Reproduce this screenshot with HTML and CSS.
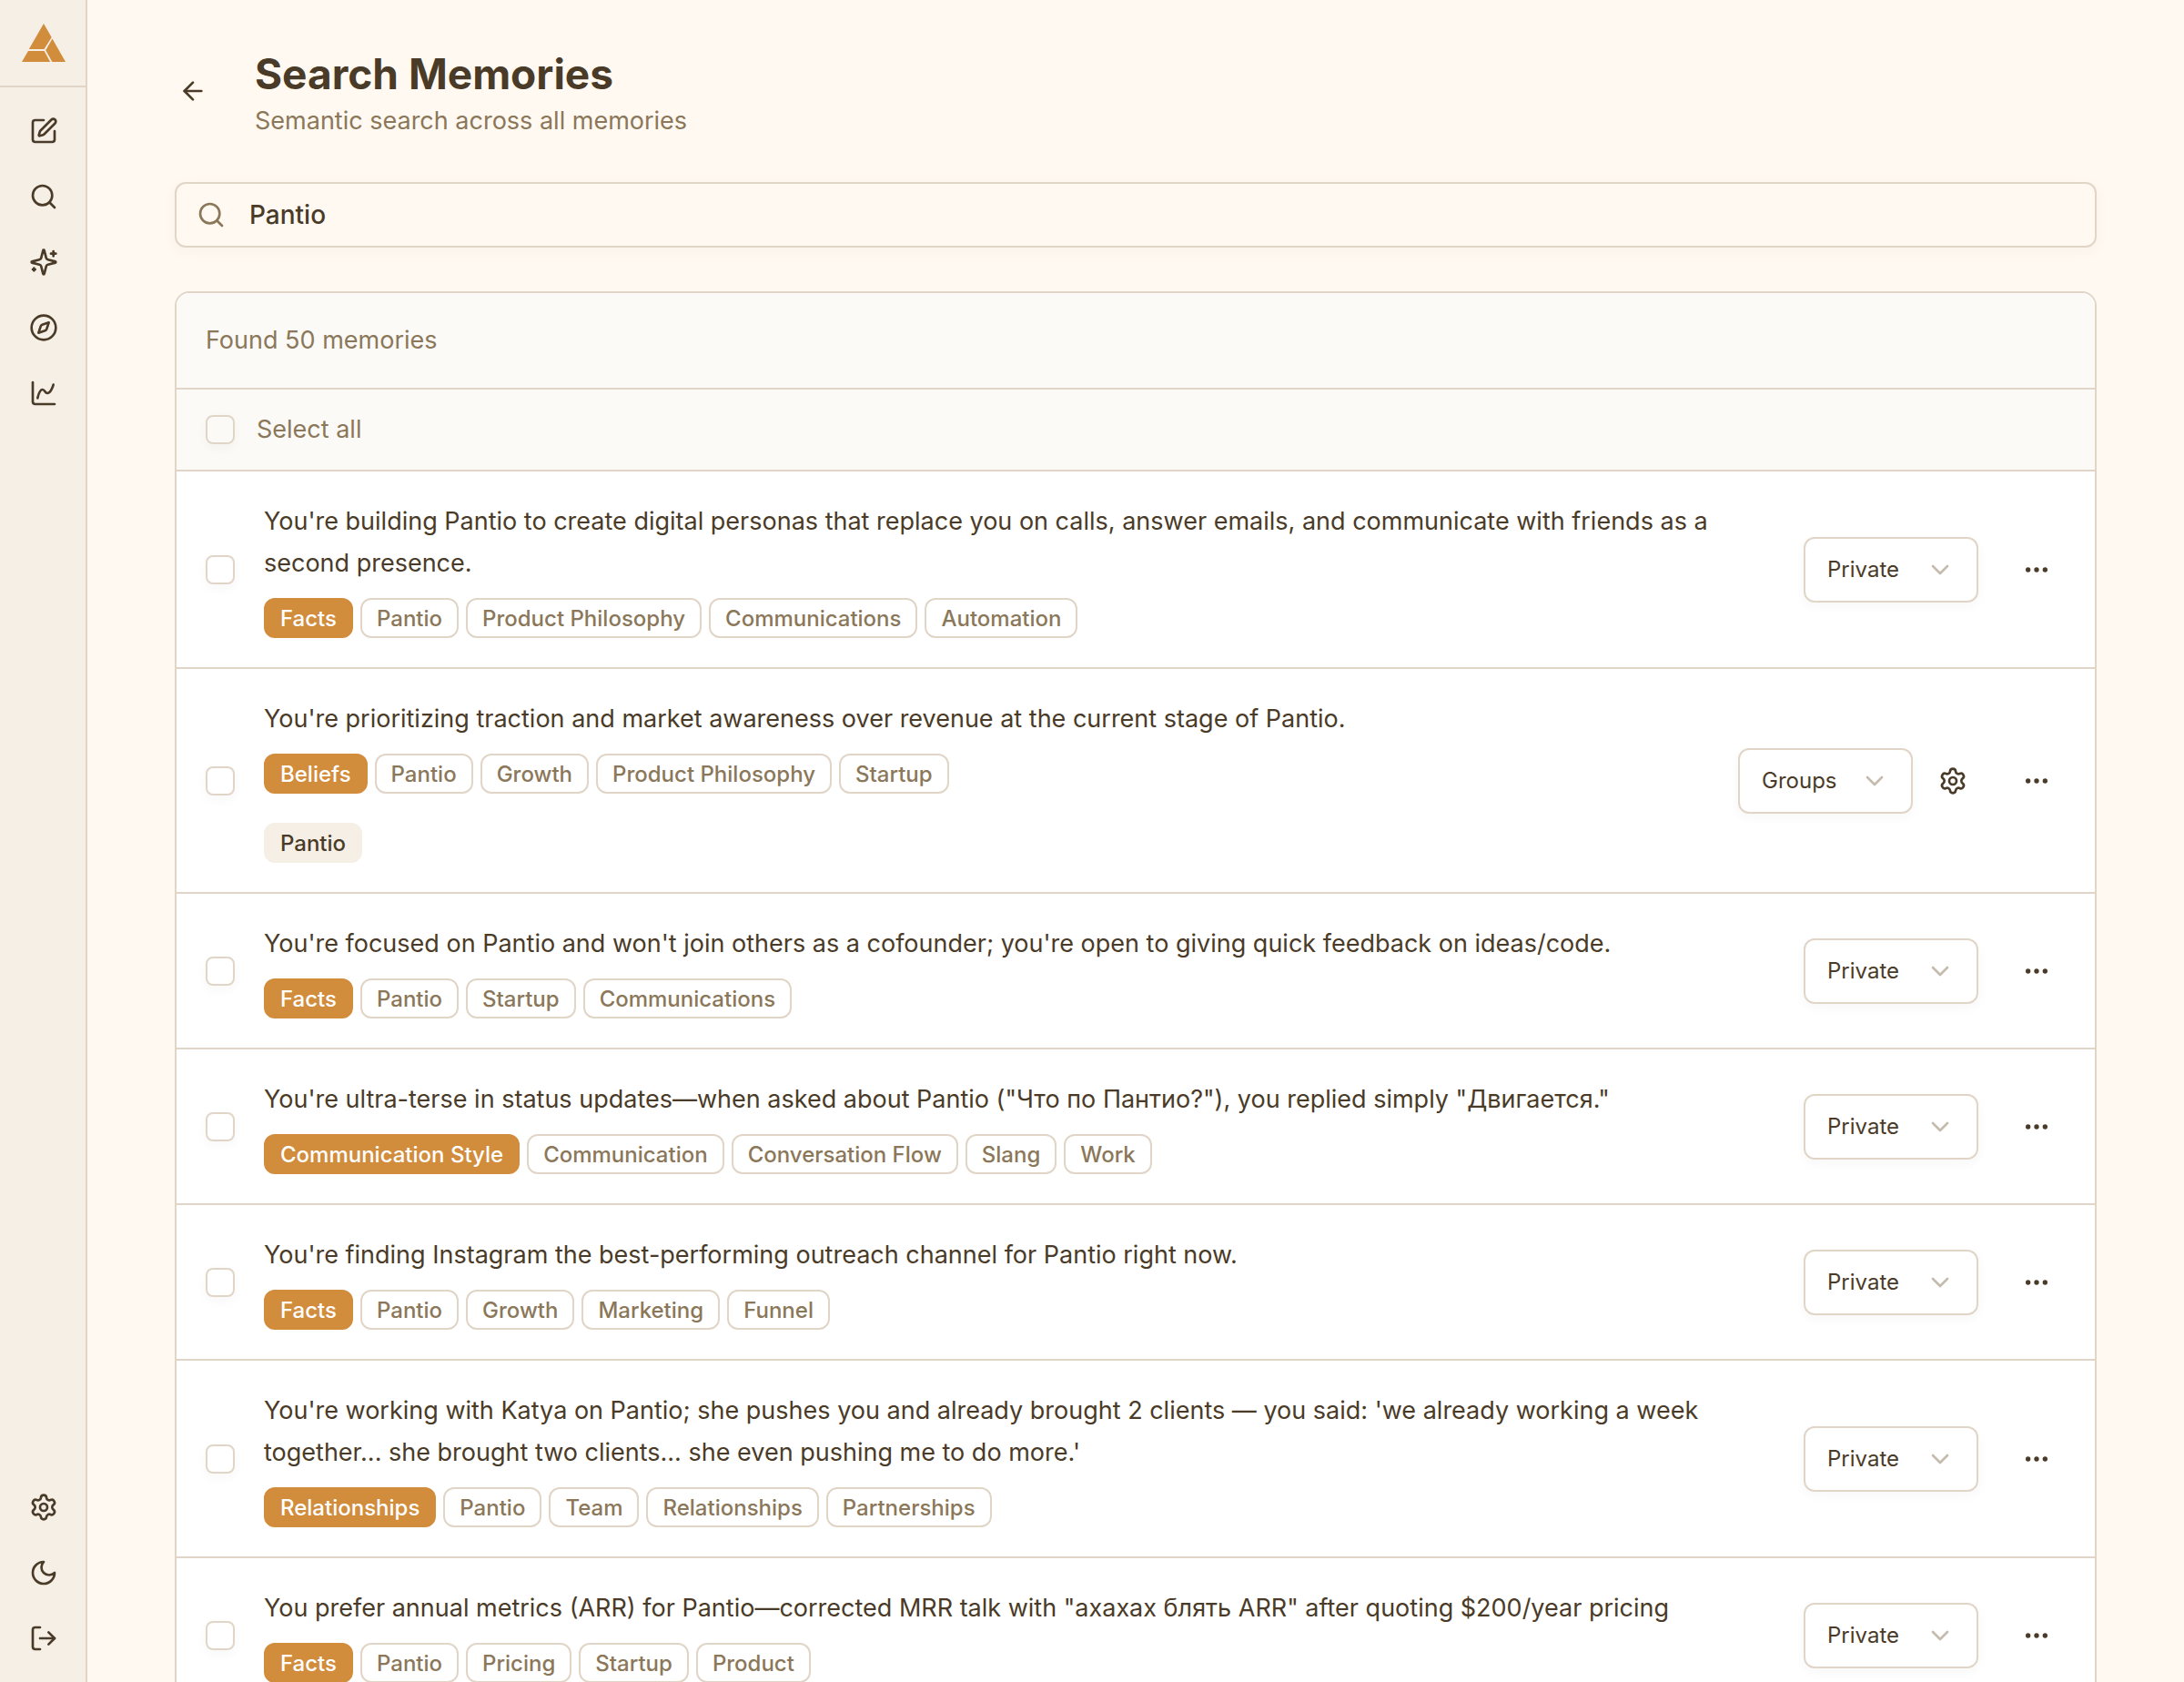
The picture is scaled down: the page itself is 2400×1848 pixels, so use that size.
FILE: index.html
```html
<!DOCTYPE html>
<html lang="en">
<head>
<meta charset="utf-8">
<title>Search Memories</title>
<link rel="stylesheet" href="styles.css">
</head>
<body>
<svg class="sprite" aria-hidden="true">
  <symbol id="i-edit" viewBox="0 0 24 24"><path d="M12 3H5a2 2 0 0 0-2 2v14a2 2 0 0 0 2 2h14a2 2 0 0 0 2-2v-7"/><path d="M18.375 2.625a1 1 0 0 1 3 3l-9.013 9.014a2 2 0 0 1-.853.505l-2.873.84a.5.5 0 0 1-.62-.62l.84-2.873a2 2 0 0 1 .506-.852z"/></symbol>
  <symbol id="i-search" viewBox="0 0 24 24"><circle cx="11" cy="11" r="8"/><path d="m21 21-4.3-4.3"/></symbol>
  <symbol id="i-sparkles" viewBox="0 0 24 24"><path d="M9.937 15.5A2 2 0 0 0 8.5 14.063l-6.135-1.582a.5.5 0 0 1 0-.962L8.5 9.936A2 2 0 0 0 9.937 8.5l1.582-6.135a.5.5 0 0 1 .963 0L14.063 8.5A2 2 0 0 0 15.5 9.937l6.135 1.581a.5.5 0 0 1 0 .964L15.5 14.063a2 2 0 0 0-1.437 1.437l-1.582 6.135a.5.5 0 0 1-.963 0z"/><path d="M20 3v4"/><path d="M22 5h-4"/><path d="M4 17v2"/><path d="M5 18H3"/></symbol>
  <symbol id="i-compass" viewBox="0 0 24 24"><path d="m16.24 7.76-1.804 5.411a2 2 0 0 1-1.265 1.265L7.76 16.24l1.804-5.411a2 2 0 0 1 1.265-1.265z"/><circle cx="12" cy="12" r="10"/></symbol>
  <symbol id="i-chart" viewBox="0 0 24 24"><path d="M3 3v16a2 2 0 0 0 2 2h16"/><path d="M7 16c.5-2 1.5-7 4-7 2 0 2 3 4 3 2.500 0 4.500-5 5-7"/></symbol>
  <symbol id="i-gear" viewBox="0 0 24 24"><path d="M9.671 4.136a2.340 2.340 0 0 1 4.659 0 2.340 2.340 0 0 0 3.319 1.915 2.340 2.340 0 0 1 2.330 4.033 2.340 2.340 0 0 0 0 3.831 2.340 2.340 0 0 1-2.330 4.033 2.340 2.340 0 0 0-3.319 1.915 2.340 2.340 0 0 1-4.659 0 2.340 2.340 0 0 0-3.320-1.915 2.340 2.340 0 0 1-2.330-4.033 2.340 2.340 0 0 0 0-3.831A2.340 2.340 0 0 1 6.350 6.051a2.340 2.340 0 0 0 3.319-1.915"/><circle cx="12" cy="12" r="3"/></symbol>
  <symbol id="i-moon" viewBox="0 0 24 24"><path d="M12 3a6 6 0 0 0 9 9 9 9 0 1 1-9-9Z"/></symbol>
  <symbol id="i-exit" viewBox="0 0 24 24"><path d="M9 21H5a2 2 0 0 1-2-2V5a2 2 0 0 1 2-2h4"/><path d="m16 17 5-5-5-5"/><path d="M21 12H9"/></symbol>
  <symbol id="i-back" viewBox="0 0 24 24"><path d="m12 19-7-7 7-7"/><path d="M19 12H5"/></symbol>
  <symbol id="i-down" viewBox="0 0 24 24"><path d="m6 9 6 6 6-6"/></symbol>
  <symbol id="i-more" viewBox="0 0 24 24"><circle cx="12" cy="12" r="1"/><circle cx="19" cy="12" r="1"/><circle cx="5" cy="12" r="1"/></symbol>
</svg>
<div class="app">
  <aside class="sidebar">
    <a class="logo" href="#" aria-label="Home">
      <svg viewBox="0 0 48 42"><path d="M24 0 32.700 15 24.500 28H7.800Z"/><path d="M33.500 16.500 48 42H33.400L26.200 29.200Z"/><path d="M7 30H24.600L31.200 42H0Z"/></svg>
    </a>
    <nav class="nav" aria-label="Main">
      <a href="#" aria-label="New"><svg class="icon"><use href="#i-edit"/></svg></a>
      <a href="#" aria-label="Search"><svg class="icon"><use href="#i-search"/></svg></a>
      <a href="#" aria-label="Memories"><svg class="icon"><use href="#i-sparkles"/></svg></a>
      <a href="#" aria-label="Explore"><svg class="icon"><use href="#i-compass"/></svg></a>
      <a href="#" aria-label="Analytics"><svg class="icon"><use href="#i-chart"/></svg></a>
    </nav>
    <div class="nav">
      <a href="#" aria-label="Settings"><svg class="icon"><use href="#i-gear"/></svg></a>
      <button type="button" aria-label="Dark mode"><svg class="icon"><use href="#i-moon"/></svg></button>
      <button type="button" aria-label="Log out"><svg class="icon"><use href="#i-exit"/></svg></button>
    </div>
  </aside>
  <main class="main">
    <header class="head">
      <a class="back" href="#" aria-label="Back"><svg class="icon"><use href="#i-back"/></svg></a>
      <div>
        <h1>Search Memories</h1>
        <p>Semantic search across all memories</p>
      </div>
    </header>
    <label class="search">
      <svg class="icon"><use href="#i-search"/></svg>
      <input type="text" value="Pantio" aria-label="Search memories">
    </label>
    <section class="card">
      <p class="found">Found 50 memories</p>
      <label class="all"><input class="check" type="checkbox">Select all</label>
      <ul class="list">
        <li class="row">
          <input class="check" type="checkbox" aria-label="Select memory">
          <div class="body"><p>You're building Pantio to create digital personas that replace you on calls, answer emails, and communicate with friends as a second presence.</p>
            <div class="tags"><span class="tag main-tag">Facts</span><span class="tag">Pantio</span><span class="tag">Product Philosophy</span><span class="tag">Communications</span><span class="tag">Automation</span></div></div>
          <div class="access"><span class="select"><select aria-label="Visibility"><option>Private</option><option>Groups</option></select><svg class="icon"><use href="#i-down"/></svg></span></div>
          <button class="more" type="button" aria-label="More"><svg class="icon"><use href="#i-more"/></svg></button>
        </li>
        <li class="row">
          <input class="check" type="checkbox" aria-label="Select memory">
          <div class="body"><p>You're prioritizing traction and market awareness over revenue at the current stage of Pantio.</p>
            <div class="tags"><span class="tag main-tag">Beliefs</span><span class="tag">Pantio</span><span class="tag">Growth</span><span class="tag">Product Philosophy</span><span class="tag">Startup</span></div>
            <div class="groups"><span class="tag group-tag">Pantio</span></div></div>
          <div class="access"><span class="select"><select aria-label="Visibility"><option>Private</option><option selected>Groups</option></select><svg class="icon"><use href="#i-down"/></svg></span><button class="config" type="button" aria-label="Group settings"><svg class="icon"><use href="#i-gear"/></svg></button></div>
          <button class="more" type="button" aria-label="More"><svg class="icon"><use href="#i-more"/></svg></button>
        </li>
        <li class="row">
          <input class="check" type="checkbox" aria-label="Select memory">
          <div class="body"><p>You're focused on Pantio and won't join others as a cofounder; you're open to giving quick feedback on ideas/code.</p>
            <div class="tags"><span class="tag main-tag">Facts</span><span class="tag">Pantio</span><span class="tag">Startup</span><span class="tag">Communications</span></div></div>
          <div class="access"><span class="select"><select aria-label="Visibility"><option>Private</option><option>Groups</option></select><svg class="icon"><use href="#i-down"/></svg></span></div>
          <button class="more" type="button" aria-label="More"><svg class="icon"><use href="#i-more"/></svg></button>
        </li>
        <li class="row">
          <input class="check" type="checkbox" aria-label="Select memory">
          <div class="body"><p>You're ultra-terse in status updates—when asked about Pantio ("Что по Пантио?"), you replied simply "Двигается."</p>
            <div class="tags"><span class="tag main-tag">Communication Style</span><span class="tag">Communication</span><span class="tag">Conversation Flow</span><span class="tag">Slang</span><span class="tag">Work</span></div></div>
          <div class="access"><span class="select"><select aria-label="Visibility"><option>Private</option><option>Groups</option></select><svg class="icon"><use href="#i-down"/></svg></span></div>
          <button class="more" type="button" aria-label="More"><svg class="icon"><use href="#i-more"/></svg></button>
        </li>
        <li class="row">
          <input class="check" type="checkbox" aria-label="Select memory">
          <div class="body"><p>You're finding Instagram the best-performing outreach channel for Pantio right now.</p>
            <div class="tags"><span class="tag main-tag">Facts</span><span class="tag">Pantio</span><span class="tag">Growth</span><span class="tag">Marketing</span><span class="tag">Funnel</span></div></div>
          <div class="access"><span class="select"><select aria-label="Visibility"><option>Private</option><option>Groups</option></select><svg class="icon"><use href="#i-down"/></svg></span></div>
          <button class="more" type="button" aria-label="More"><svg class="icon"><use href="#i-more"/></svg></button>
        </li>
        <li class="row">
          <input class="check" type="checkbox" aria-label="Select memory">
          <div class="body"><p>You're working with Katya on Pantio; she pushes you and already brought 2 clients — you said: 'we already working a week together... she brought two clients... she even pushing me to do more.'</p>
            <div class="tags"><span class="tag main-tag">Relationships</span><span class="tag">Pantio</span><span class="tag">Team</span><span class="tag">Relationships</span><span class="tag">Partnerships</span></div></div>
          <div class="access"><span class="select"><select aria-label="Visibility"><option>Private</option><option>Groups</option></select><svg class="icon"><use href="#i-down"/></svg></span></div>
          <button class="more" type="button" aria-label="More"><svg class="icon"><use href="#i-more"/></svg></button>
        </li>
        <li class="row">
          <input class="check" type="checkbox" aria-label="Select memory">
          <div class="body"><p>You prefer annual metrics (ARR) for Pantio—corrected MRR talk with "ахахах блять ARR" after quoting $200/year pricing</p>
            <div class="tags"><span class="tag main-tag">Facts</span><span class="tag">Pantio</span><span class="tag">Pricing</span><span class="tag">Startup</span><span class="tag">Product</span></div></div>
          <div class="access"><span class="select"><select aria-label="Visibility"><option>Private</option><option>Groups</option></select><svg class="icon"><use href="#i-down"/></svg></span></div>
          <button class="more" type="button" aria-label="More"><svg class="icon"><use href="#i-more"/></svg></button>
        </li>
      </ul>
    </section>
  </main>
</div>
</body>
</html>
```
FILE: styles.css
```css
:root {
  --bg: #fff9f2;
  --side: #f5efe6;
  --line: #e0d5c7;
  --text: #4a3b28;
  --muted: #8b7759;
  --accent: #d18c3c;
}
* { box-sizing: border-box; margin: 0; padding: 0; }
body {
  background: var(--bg);
  color: var(--text);
  font: 400 27px/40px Inter, "Liberation Sans", sans-serif;
}
button, input, select { font: inherit; color: inherit; background: none; border: 0; }
.sprite { display: none; }
.icon {
  width: 32px;
  height: 32px;
  flex: none;
  fill: none;
  stroke: currentColor;
  stroke-width: 2px;
  stroke-linecap: round;
  stroke-linejoin: round;
}
.app { display: flex; height: 100vh; overflow: hidden; }

.sidebar {
  display: flex;
  flex-direction: column;
  flex: none;
  width: 96px;
  background: var(--side);
  box-shadow: inset -2px 0 var(--line);
}
.logo {
  display: grid;
  place-items: center;
  height: 96px;
  border-bottom: 2px solid var(--line);
}
.logo svg { width: 48px; height: 42px; fill: var(--accent); }
.nav { display: flex; flex-direction: column; align-items: center; gap: 8px; padding: 16px 0; }
.nav:last-child { margin-top: auto; }
.nav > * { display: grid; place-items: center; width: 64px; height: 64px; color: inherit; }

.main { flex: 1; min-width: 0; padding: 48px 96px 0; overflow: hidden; }
.head { display: flex; align-items: center; gap: 48px; height: 104px; }
.back { display: grid; place-items: center; width: 40px; height: 40px; color: inherit; }
h1 { font-size: 46px; line-height: 66px; font-weight: 700; }
.head p { color: var(--muted); line-height: 38px; }
.search {
  display: flex;
  align-items: center;
  gap: 26px;
  height: 72px;
  margin-top: 48px;
  padding: 0 22px;
  border: 2px solid var(--line);
  border-radius: 12px;
  box-shadow: 0 4px 16px rgba(74, 59, 40, .04);
}
.search .icon { color: var(--muted); }
.search input { flex: 1; height: 66px; font-size: 28px; font-weight: 500; outline: none; }

.card {
  margin-top: 48px;
  border: 2px solid var(--line);
  border-radius: 16px 16px 0 0;
  background: #fff;
  overflow: hidden;
}
.found, .all { background: #fbfaf6; color: var(--muted); border-bottom: 2px solid var(--line); }
.found { padding: 32px; }
.all { display: flex; align-items: center; gap: 24px; padding: 24px 32px; }
.check {
  appearance: none;
  flex: none;
  width: 32px;
  height: 32px;
  border: 2px solid var(--line);
  border-radius: 8px;
  box-shadow: 0 4px 12px rgba(74, 59, 40, .04);
}
.list { list-style: none; }
.row {
  display: flex;
  align-items: center;
  gap: 32px;
  padding: 32px;
  border-bottom: 2px solid var(--line);
}
.body { flex: 1; min-width: 0; }
.body p { line-height: 46px; }
.tags, .groups { display: flex; flex-wrap: wrap; gap: 8px; margin-top: 15px; }
.groups { margin-top: 32px; }
.tag {
  height: 44px;
  padding: 0 16px;
  border: 2px solid var(--line);
  border-radius: 12px;
  color: var(--muted);
  font-size: 24px;
  line-height: 42px;
  font-weight: 500;
}
.main-tag { background: var(--accent); border-color: var(--accent); color: #fff; }
.group-tag { background: var(--side); border-color: var(--side); color: var(--text); }
.access { display: flex; align-items: center; gap: 16px; margin-left: 32px; }
.select { display: grid; align-items: center; width: 192px; }
.select > * { grid-area: 1 / 1; }
.select select {
  appearance: none;
  width: 100%;
  height: 72px;
  padding: 0 24px;
  border: 2px solid var(--line);
  border-radius: 12px;
  box-shadow: 0 4px 12px rgba(74, 59, 40, .04);
  font-size: 24px;
}
.select .icon { justify-self: end; margin-right: 26px; color: #c5bbae; pointer-events: none; }
.config, .more { display: grid; place-items: center; width: 56px; height: 64px; }
.more { width: 64px; }
```
